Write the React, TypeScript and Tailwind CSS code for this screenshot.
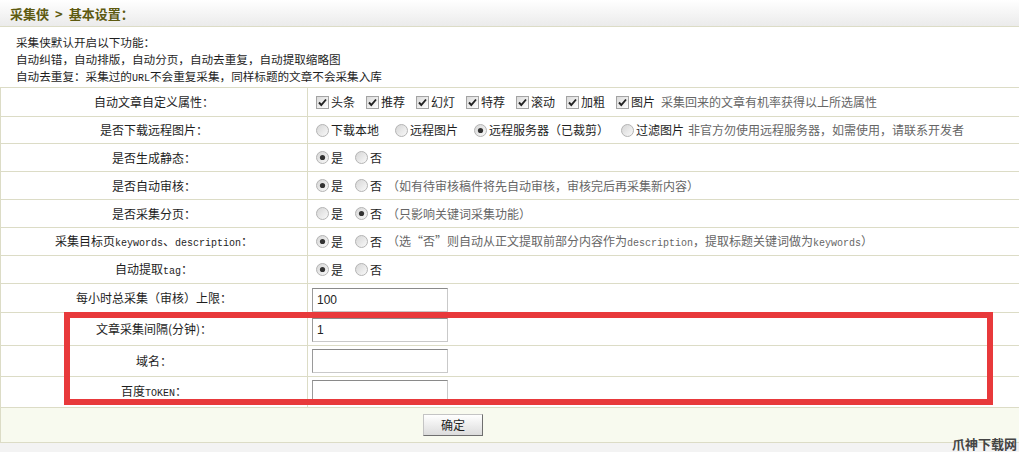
import React from "react";

const line = "border-[#dcdcc6]";

function Check() {
  return (
    <svg width="13" height="13" viewBox="0 0 13 13" className="shrink-0">
      <defs>
        <linearGradient id="cb" x1="0" y1="0" x2="1" y2="1">
          <stop offset="0" stopColor="#d9d9d9" />
          <stop offset="1" stopColor="#ffffff" />
        </linearGradient>
      </defs>
      <rect x="0.5" y="0.5" width="12" height="12" fill="url(#cb)" stroke="#a3a3a3" />
      <path d="M3 6.5 L5.3 9 L10 3.5" fill="none" stroke="#222" strokeWidth="1.9" />
    </svg>
  );
}

function Radio({ on = false }: { on?: boolean }) {
  return (
    <svg width="13" height="13" viewBox="0 0 13 13" className="shrink-0">
      <defs>
        <linearGradient id="rb" x1="0" y1="0" x2="1" y2="1">
          <stop offset="0" stopColor="#d4d4d4" />
          <stop offset="1" stopColor="#fbfbfb" />
        </linearGradient>
      </defs>
      <circle cx="6.5" cy="6.5" r="6" fill="url(#rb)" stroke="#b4b4b4" />
      {on && <circle cx="6.5" cy="6.5" r="2.6" fill="#333" />}
    </svg>
  );
}

function Opt({ label, type, on, gap = "mr-[12px]" }: { label: string; type: "c" | "r"; on?: boolean; gap?: string }) {
  return (
    <span className={`flex items-center ${gap}`}>
      {type === "c" ? <Check /> : <Radio on={on} />}
      <span className="ml-[2px]">{label}</span>
    </span>
  );
}

function Note({ children }: { children: React.ReactNode }) {
  return <span className="text-[#666]">{children}</span>;
}

function Mono({ children }: { children: React.ReactNode }) {
  return <span className="font-['Liberation_Mono'] text-[10px]">{children}</span>;
}

function Row({ h, label, children, pad = "pl-[8px]" }: { h: string; label: React.ReactNode; children?: React.ReactNode; pad?: string }) {
  return (
    <div className={`flex ${h} border-b ${line}`}>
      <div className={`w-[307px] shrink-0 border-r ${line} flex items-center justify-center`}>{label}</div>
      <div className={`flex flex-1 items-center ${pad}`}>{children}</div>
    </div>
  );
}

function Field({ value = "" }: { value?: string }) {
  return (
    <div className="w-[136px] h-[24px] border border-[#c9c9c9] border-t-[#8a8a8a] border-l-[#9a9a9a] bg-white flex items-center pl-[4px] font-['Liberation_Sans'] text-[12px] text-[#222]">
      {value}
    </div>
  );
}

export default function App() {
  return (
    <div className="relative w-[1019px] h-[452px] overflow-hidden bg-[#f3f3f3] text-[12px] leading-none text-[#1e1e1e] font-['Noto_Sans_CJK_SC',sans-serif]">
      {/* header */}
      <div className={`h-[27px] border-b ${line} bg-linear-to-b from-white to-[#ebebeb] flex items-center pl-[10px]`}>
        <span className="flex font-bold text-[13px] text-[#5d5a10]">
          采集侠<span className="mx-[6px]">&gt;</span>基本设置：
        </span>
      </div>

      {/* info */}
      <div className="h-[60px] bg-white pl-[16px] pt-[7px] leading-[17px] text-[11.6px]">
        <div>采集侠默认开启以下功能：</div>
        <div>自动纠错，自动排版，自动分页，自动去重复，自动提取缩略图</div>
        <div>自动去重复：采集过的<Mono>URL</Mono>不会重复采集，同样标题的文章不会采集入库</div>
      </div>

      <div className={`bg-white border-l border-t ${line}`}>
        <Row h="h-[29px]" label="自动文章自定义属性：">
          <Opt type="c" label="头条" gap="mr-[11px]" />
          <Opt type="c" label="推荐" gap="mr-[11px]" />
          <Opt type="c" label="幻灯" gap="mr-[11px]" />
          <Opt type="c" label="特荐" gap="mr-[11px]" />
          <Opt type="c" label="滚动" gap="mr-[11px]" />
          <Opt type="c" label="加粗" gap="mr-[11px]" />
          <Opt type="c" label="图片" gap="mr-[6px]" />
          <Note>采集回来的文章有机率获得以上所选属性</Note>
        </Row>
        <Row h="h-[27px]" label="是否下载远程图片：">
          <Opt type="r" label="下载本地" gap="mr-[16px]" />
          <Opt type="r" label="远程图片" gap="mr-[16px]" />
          <Opt type="r" on label="远程服务器（已裁剪）" gap="mr-[12px]" />
          <Opt type="r" label="过滤图片" gap="mr-[4px]" />
          <Note>非官方勿使用远程服务器，如需使用，请联系开发者</Note>
        </Row>
        <Row h="h-[28px]" label="是否生成静态：">
          <Opt type="r" on label="是" />
          <Opt type="r" label="否" />
        </Row>
        <Row h="h-[28px]" label="是否自动审核：">
          <Opt type="r" on label="是" />
          <Opt type="r" label="否" gap="mr-[5px]" />
          <Note>（如有待审核稿件将先自动审核，审核完后再采集新内容）</Note>
        </Row>
        <Row h="h-[28px]" label="是否采集分页：">
          <Opt type="r" label="是" />
          <Opt type="r" on label="否" gap="mr-[5px]" />
          <Note>（只影响关键词采集功能）</Note>
        </Row>
        <Row
          h="h-[28px]"
          label={
            <span>
              采集目标页<Mono>keywords</Mono>、<Mono>description</Mono>：
            </span>
          }
        >
          <Opt type="r" on label="是" />
          <Opt type="r" label="否" gap="mr-[5px]" />
          <Note>
            （选“否”则自动从正文提取前部分内容作为<Mono>description</Mono>，提取标题关键词做为<Mono>keywords</Mono>）
          </Note>
        </Row>
        <Row
          h="h-[28px]"
          label={
            <span>
              自动提取<Mono>tag</Mono>：
            </span>
          }
        >
          <Opt type="r" on label="是" />
          <Opt type="r" label="否" />
        </Row>
        <Row h="h-[29px]" label="每小时总采集（审核）上限：" pad="pl-[4px] pt-[3px]">
          <Field value="100" />
        </Row>
        <Row h="h-[33px]" label="文章采集间隔(分钟)：" pad="pl-[4px] pt-[2px]">
          <Field value="1" />
        </Row>
        <Row h="h-[31px]" label="域名：" pad="pl-[4px]">
          <Field />
        </Row>
        <Row h="h-[31px]" label={<span>百度<Mono>TOKEN</Mono>：</span>} pad="pl-[4px]">
          <Field />
        </Row>
        <div className={`h-[35px] bg-[#f8faef] border-b ${line} flex items-center pl-[422px]`}>
          <button className="w-[60px] h-[22px] border border-[#c4c4c4] border-b-[#6f6f6f] border-r-[#6f6f6f] bg-linear-to-b from-white to-[#dcdcdc] text-[12px] text-[#1e1e1e]">
            确定
          </button>
        </div>
      </div>

      {/* highlight */}
      <div className="absolute left-[64px] top-[312px] w-[929px] h-[93px] border-[6px] border-[#e8393b]" />

      {/* watermark */}
      <div className="absolute right-[2px] top-[437px] text-[13px] font-bold text-[#444] leading-none">爪神下载网</div>
    </div>
  );
}
